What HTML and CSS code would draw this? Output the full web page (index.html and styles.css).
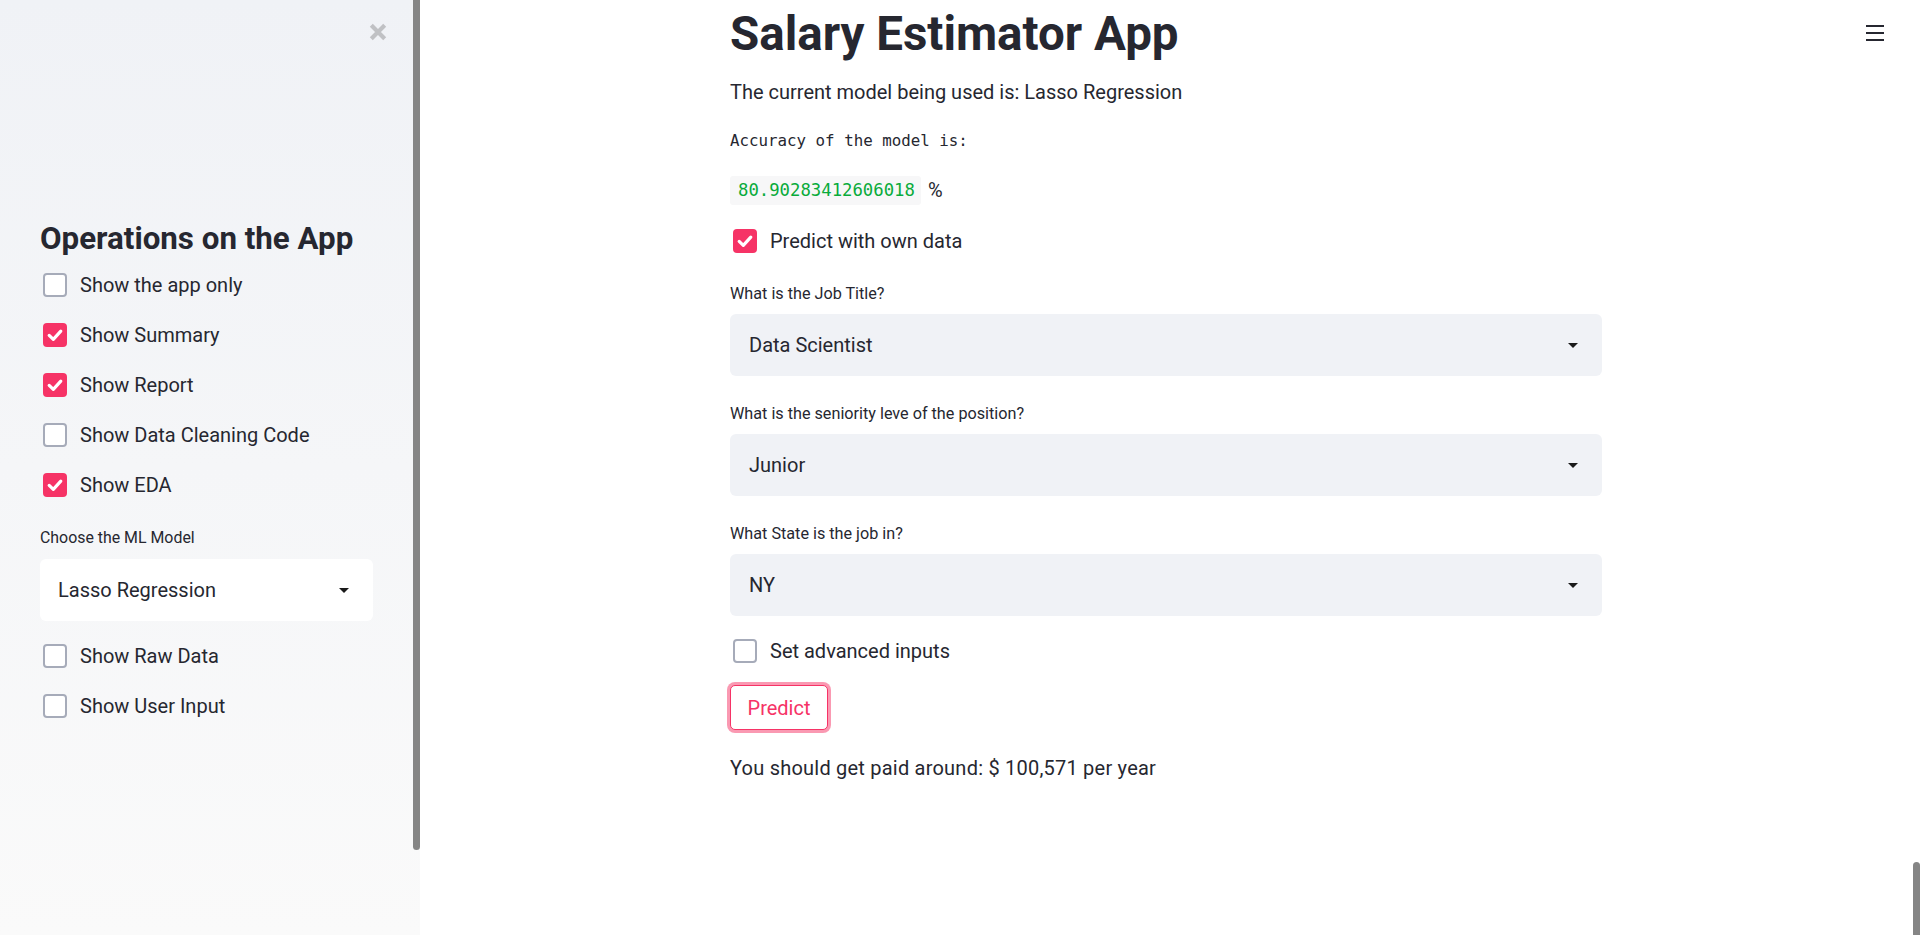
FILE: index.html
```html
<!DOCTYPE html>
<html lang="en">
<head>
<meta charset="utf-8">
<title>Salary Estimator App</title>
<link rel="stylesheet" href="styles.css">
</head>
<body>
<div class="app">
  <aside class="sidebar">
    <div class="sidebar-inner">
      <div class="sb-top">
        <svg class="close-icon" width="18" height="18" viewBox="0 0 18 18"><path d="M2.3 2.3 L15.7 15.7 M15.7 2.3 L2.3 15.7" stroke="#c0c1c4" stroke-width="4.2" fill="none"/></svg>
      </div>
      <h2 class="sb-heading">Operations on the App</h2>
      <div class="cb-list">
        <div class="cb-row"><span class="box"></span><span class="cb-label">Show the app only</span></div>
        <div class="cb-row"><span class="box checked"><svg width="24" height="24" viewBox="0 0 24 24"><path d="M6.2 12.4 L10.3 16.3 L17.8 8.2" stroke="#fff" stroke-width="3.2" fill="none" stroke-linecap="round" stroke-linejoin="round"/></svg></span><span class="cb-label">Show Summary</span></div>
        <div class="cb-row"><span class="box checked"><svg width="24" height="24" viewBox="0 0 24 24"><path d="M6.2 12.4 L10.3 16.3 L17.8 8.2" stroke="#fff" stroke-width="3.2" fill="none" stroke-linecap="round" stroke-linejoin="round"/></svg></span><span class="cb-label">Show Report</span></div>
        <div class="cb-row"><span class="box"></span><span class="cb-label">Show Data Cleaning Code</span></div>
        <div class="cb-row"><span class="box checked"><svg width="24" height="24" viewBox="0 0 24 24"><path d="M6.2 12.4 L10.3 16.3 L17.8 8.2" stroke="#fff" stroke-width="3.2" fill="none" stroke-linecap="round" stroke-linejoin="round"/></svg></span><span class="cb-label">Show EDA</span></div>
      </div>
      <div class="sb-label">Choose the ML Model</div>
      <div class="select select-white">
        <span>Lasso Regression</span>
        <svg width="10" height="5" viewBox="0 0 10 5"><path d="M0 0 L10 0 L5 5 Z" fill="#1a1a1a"/></svg>
      </div>
      <div class="cb-list cb-list-2">
        <div class="cb-row"><span class="box"></span><span class="cb-label">Show Raw Data</span></div>
        <div class="cb-row"><span class="box"></span><span class="cb-label">Show User Input</span></div>
      </div>
    </div>
    <div class="sb-scroll"><div class="sb-thumb"></div></div>
  </aside>

  <main class="main">
    <div class="main-content">
      <div class="column">
        <h1 class="title">Salary Estimator App</h1>
        <p class="text subtitle">The current model being used is: Lasso Regression</p>
        <pre class="mono">Accuracy of the model is:</pre>
        <p class="text code-line"><code class="code">80.90283412606018</code> %</p>
        <div class="cb-row main-cb"><span class="box checked"><svg width="24" height="24" viewBox="0 0 24 24"><path d="M6.2 12.4 L10.3 16.3 L17.8 8.2" stroke="#fff" stroke-width="3.2" fill="none" stroke-linecap="round" stroke-linejoin="round"/></svg></span><span class="cb-label">Predict with own data</span></div>

        <div class="field-label">What is the Job Title?</div>
        <div class="select">
          <span>Data Scientist</span>
          <svg width="10" height="5" viewBox="0 0 10 5"><path d="M0 0 L10 0 L5 5 Z" fill="#1a1a1a"/></svg>
        </div>
        <div class="field-label">What is the seniority leve of the position?</div>
        <div class="select">
          <span>Junior</span>
          <svg width="10" height="5" viewBox="0 0 10 5"><path d="M0 0 L10 0 L5 5 Z" fill="#1a1a1a"/></svg>
        </div>
        <div class="field-label">What State is the job in?</div>
        <div class="select">
          <span>NY</span>
          <svg width="10" height="5" viewBox="0 0 10 5"><path d="M0 0 L10 0 L5 5 Z" fill="#1a1a1a"/></svg>
        </div>

        <div class="cb-row main-cb advanced"><span class="box"></span><span class="cb-label">Set advanced inputs</span></div>
        <div class="btn-row"><button class="btn">Predict</button></div>
        <p class="text result">You should get paid around: $ 100,571 per year</p>
      </div>
      <div class="hamburger">
        <span></span><span></span><span></span>
      </div>
    </div>
    <div class="main-scroll"><div class="main-thumb"></div></div>
  </main>
</div>
</body>
</html>
```

FILE: styles.css
```css
html, body {
  margin: 0;
  padding: 0;
  height: 935px;
  overflow: hidden;
  background: #ffffff;
}

body {
  font-family: Roboto, "Liberation Sans", sans-serif;
  color: #262730;
}

.app {
  display: flex;
  height: 935px;
}

/* ---------- Sidebar ---------- */
.sidebar {
  width: 420px;
  flex: 0 0 420px;
  display: flex;
  background: linear-gradient(180deg, #f0f2f6 0%, #fafafa 100%);
}

.sidebar-inner {
  flex: 1;
  display: flex;
  flex-direction: column;
  padding: 0 40px 0 40px;
}

.sb-top {
  display: flex;
  justify-content: flex-end;
  padding-top: 23px;
  margin-right: -14px;
  height: 18px;
}

.close-icon {
  display: block;
}

.sb-heading {
  margin: 178px 0 0 0;
  font-size: 31.3px;
  font-weight: 700;
  line-height: 40px;
  height: 40px;
  color: #262730;
}

.cb-list {
  display: flex;
  flex-direction: column;
  gap: 20px;
  margin-top: 11px;
}

.cb-list-2 {
  margin-top: 20px;
}

.cb-row {
  display: flex;
  align-items: center;
  height: 30px;
  padding-left: 3px;
}

.box {
  box-sizing: border-box;
  width: 24px;
  height: 24px;
  border: 2px solid #a6abb9;
  border-radius: 4px;
  background: #ffffff;
  flex: 0 0 24px;
}

.box.checked {
  border: none;
  background: #f63366;
}

.box svg {
  display: block;
}

.cb-label {
  margin-left: 13px;
  font-size: 20px;
  line-height: 30px;
  color: #262730;
}

.sb-label {
  margin-top: 27px;
  font-size: 15.9px;
  line-height: 22px;
  height: 22px;
}

.select {
  box-sizing: border-box;
  height: 62px;
  border-radius: 6px;
  background: #f0f2f6;
  display: flex;
  align-items: center;
  justify-content: space-between;
  padding: 0 24px 0 19px;
  font-size: 20px;
  color: #262730;
}

.select svg {
  display: block;
}

.select-white {
  background: #ffffff;
  margin-top: 10px;
  padding-left: 18px;
}

.sb-scroll {
  width: 7px;
  flex: 0 0 7px;
}

.sb-thumb {
  height: 850px;
  background: #858585;
  border-radius: 0 0 4px 4px;
}

/* ---------- Main ---------- */
.main {
  flex: 1;
  display: flex;
  min-width: 0;
}

.main-content {
  flex: 1;
  display: flex;
  justify-content: center;
  padding-right: 1px;
  position: relative;
}

.column {
  width: 872px;
  display: flex;
  flex-direction: column;
  padding-top: 4px;
}

.title {
  margin: 0;
  font-size: 47.5px;
  font-weight: 700;
  line-height: 60px;
  height: 60px;
  color: #262730;
}

.text {
  margin: 0;
  font-size: 20px;
  line-height: 28px;
}

.subtitle {
  margin-top: 14px;
}

.mono {
  margin: 21px 0 0 0;
  font-family: "DejaVu Sans Mono", "Liberation Mono", monospace;
  font-size: 15.8px;
  line-height: 28px;
  height: 28px;
  color: #262730;
}

.code-line {
  margin-top: 20px;
  height: 30px;
  line-height: 30px;
  display: flex;
  align-items: center;
}

.code {
  font-family: "DejaVu Sans Mono", "Liberation Mono", monospace;
  font-size: 17.3px;
  color: #09ab3b;
  background: #f7f7f8;
  border-radius: 3px;
  padding: 0 6px 0 8px;
  height: 29px;
  line-height: 29px;
  margin-right: 7px;
}

.main-cb {
  margin-top: 21px;
}

.field-label {
  margin-top: 26px;
  font-size: 16.2px;
  line-height: 24px;
  height: 24px;
  margin-bottom: 8px;
}

.advanced {
  margin-top: 20px;
}

.btn-row {
  margin-top: 19px;
  display: flex;
}

.btn {
  box-sizing: border-box;
  height: 45px;
  width: 98px;
  border: 1px solid #f63366;
  border-radius: 5px;
  background: #ffffff;
  color: #f63366;
  font-family: Roboto, "Liberation Sans", sans-serif;
  font-size: 20px;
  padding: 0;
  box-shadow: 0 0 0 3px rgba(246, 51, 102, 0.5);
}

.result {
  margin-top: 24px;
  letter-spacing: 0.22px;
}

.hamburger {
  position: absolute;
  top: 25px;
  right: 29px;
  width: 18px;
  display: flex;
  flex-direction: column;
  gap: 5px;
}

.hamburger span {
  display: block;
  height: 2px;
  background: #262730;
}

.main-scroll {
  width: 7px;
  flex: 0 0 7px;
  display: flex;
  flex-direction: column;
  justify-content: flex-end;
}

.main-thumb {
  height: 73px;
  background: #858585;
  border-radius: 4px 4px 0 0;
}
```
